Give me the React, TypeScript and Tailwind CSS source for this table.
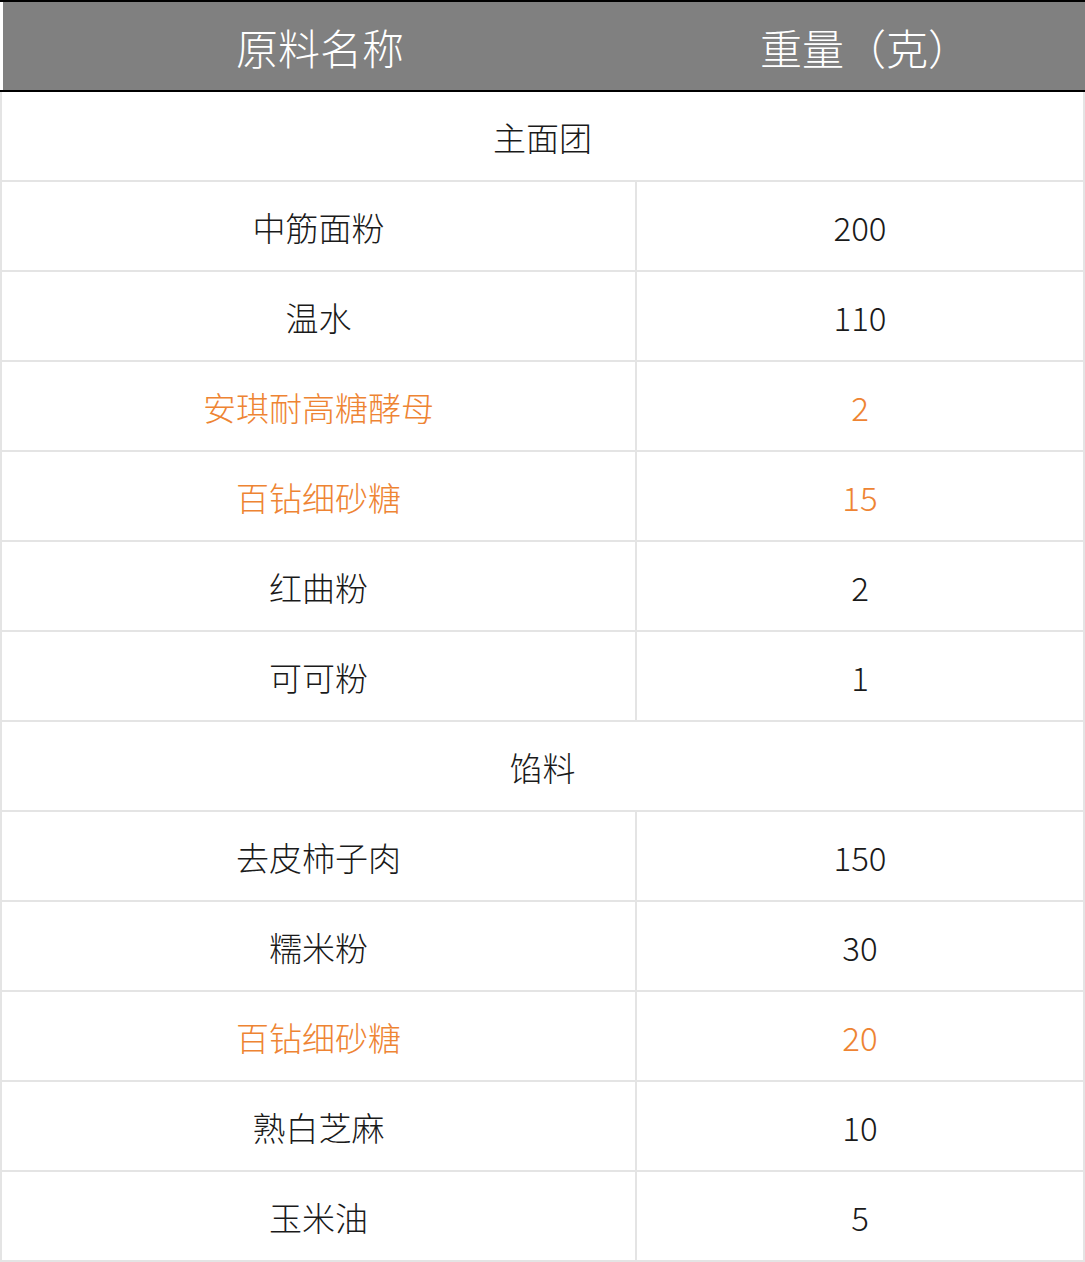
const rows: Array<{ section?: string; name?: string; qty?: string; hot?: boolean }> = [
  { section: "主面团" },
  { name: "中筋面粉", qty: "200" },
  { name: "温水", qty: "110" },
  { name: "安琪耐高糖酵母", qty: "2", hot: true },
  { name: "百钻细砂糖", qty: "15", hot: true },
  { name: "红曲粉", qty: "2" },
  { name: "可可粉", qty: "1" },
  { section: "馅料" },
  { name: "去皮柿子肉", qty: "150" },
  { name: "糯米粉", qty: "30" },
  { name: "百钻细砂糖", qty: "20", hot: true },
  { name: "熟白芝麻", qty: "10" },
  { name: "玉米油", qty: "5" },
];

export default function App() {
  return (
    <div
      className="w-[1085px] bg-white"
      style={{ fontFamily: '"Noto Sans CJK SC", "Noto Sans", sans-serif' }}
    >
      <div className="flex h-[92px] border-t-2 border-b-2 border-black bg-white pl-[3px]">
        <div className="flex w-[634px] items-center justify-center bg-[#808080] text-[42px] font-extralight text-white">
          原料名称
        </div>
        <div className="flex flex-1 items-center justify-center bg-[#808080] pl-2 text-[42px] font-extralight text-white">
          重量（克）
        </div>
      </div>

      <div className="border-x-2 border-[#e4e4e4]">
        {rows.map((r, i) =>
          r.section ? (
            <div
              key={i}
              className="flex h-[90px] items-center justify-center border-b-2 border-[#e4e4e4] pt-1 text-[33px] font-extralight text-[#1a1a1a]"
            >
              {r.section}
            </div>
          ) : (
            <div key={i} className="flex h-[90px] border-b-2 border-[#e4e4e4]">
              <div
                className={`flex w-[635px] items-center justify-center border-r-2 border-[#e4e4e4] pt-1 text-[33px] font-extralight ${
                  r.hot ? "text-[#ee8433]" : "text-[#1a1a1a]"
                }`}
              >
                {r.name}
              </div>
              <div
                className={`flex flex-1 items-center justify-center pt-1 text-[33px] font-extralight ${
                  r.hot ? "text-[#ee8433]" : "text-[#1a1a1a]"
                }`}
              >
                {r.qty}
              </div>
            </div>
          )
        )}
      </div>
    </div>
  );
}
